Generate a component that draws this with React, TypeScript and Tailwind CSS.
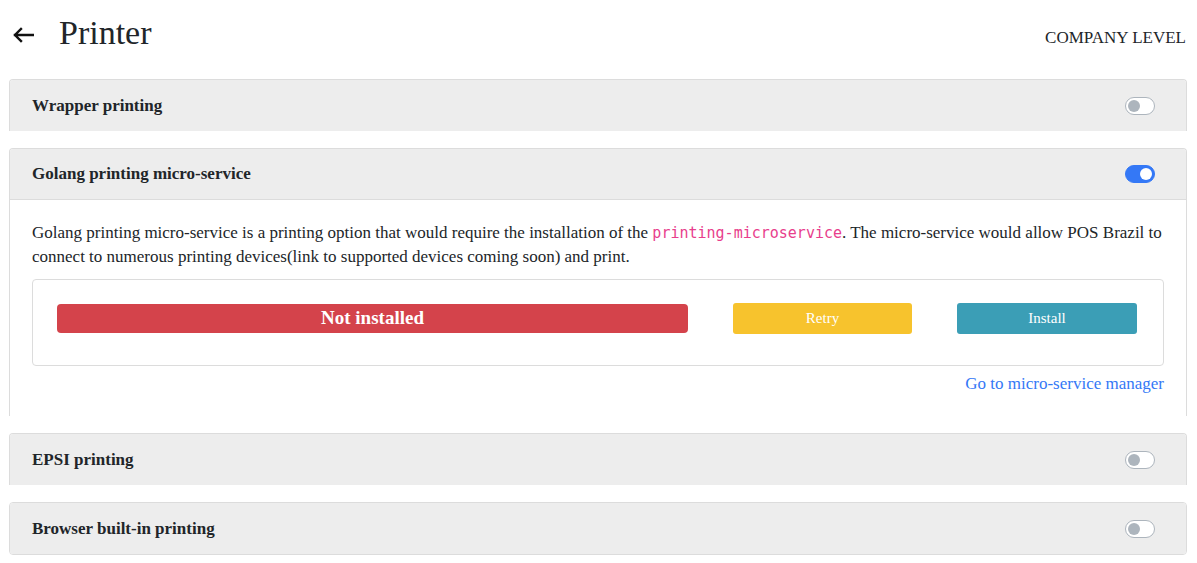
import React from 'react';

const serif = { fontFamily: '"Liberation Serif", "Times New Roman", serif' };

function Toggle({ on }: { on?: boolean }) {
  return on ? (
    <div className="w-[30px] h-[18px] rounded-full bg-[#3478f6] border border-[#3478f6] flex items-center justify-end px-[2px]">
      <div className="w-[12px] h-[12px] rounded-full bg-white" />
    </div>
  ) : (
    <div className="w-[30px] h-[18px] rounded-full bg-white border border-[#adb5bd] flex items-center px-[2px]">
      <div className="w-[12px] h-[12px] rounded-full bg-[#adb5bd]" />
    </div>
  );
}

function PanelHeader({ title, on, open }: { title: string; on?: boolean; open?: boolean }) {
  return (
    <div
      className={`h-[51px] flex items-center justify-between pl-[22px] pr-[31px] bg-[#ededed] ${
        open ? 'border-b border-[#dcdcdc]' : ''
      }`}
    >
      <span className="text-[17px] font-bold text-[#212529]">{title}</span>
      <Toggle on={on} />
    </div>
  );
}

export default function App() {
  return (
    <div className="w-[1197px] h-[563px] bg-white overflow-hidden pl-[9px] pr-[10px]" style={serif}>
      {/* Header */}
      <div className="h-[79px] flex items-center justify-between pb-[14px]">
        <div className="flex items-center">
          <svg width="22" height="16" viewBox="0 0 22 16" className="ml-[3px] mt-[5px]">
            <path d="M21 8H3M9 2L3 8l6 6" fill="none" stroke="#111" strokeWidth="2.4" strokeLinecap="square" />
          </svg>
          <span className="ml-[25px] text-[34px] leading-none text-[#212529]">Printer</span>
        </div>
        <span className="text-[17px] text-[#212529] mt-[10px] mr-[1px]">COMPANY LEVEL</span>
      </div>

      <div className="flex flex-col gap-[17px]">
        {/* Wrapper printing */}
        <div className="border border-b-0 border-[#dcdcdc] rounded-t-[4px] overflow-hidden">
          <PanelHeader title="Wrapper printing" />
        </div>

        {/* Golang printing micro-service */}
        <div className="border border-b-0 border-[#dcdcdc] rounded-t-[4px] overflow-hidden">
          <PanelHeader title="Golang printing micro-service" on open />
          <div className="px-[22px] pt-[21px] pb-[20px] bg-white">
            <p className="text-[17px] leading-[24px] text-[#212529]">
              Golang printing micro-service is a printing option that would require the installation of the{' '}
              <code
                className="text-[15px] leading-[16px] text-[#e83e8c]"
                style={{ fontFamily: '"DejaVu Sans Mono", "Liberation Mono", monospace' }}
              >
                printing-microservice
              </code>
              . The micro-service would allow POS Brazil to connect to numerous printing devices(link to supported
              devices coming soon) and print.
            </p>
            <div className="mt-[10px] border border-[#dcdcdc] rounded-[4px] pl-[24px] pr-[26px] pt-[23px] pb-[31px] flex items-center gap-[45px]">
              <div className="flex-1 h-[29px] rounded-[4px] bg-[#d4434b] text-white font-bold text-[19px] flex items-center justify-center">
                Not installed
              </div>
              <div className="w-[179px] h-[31px] rounded-[3px] bg-[#f7c32d] text-white text-[15px] flex items-center justify-center">
                Retry
              </div>
              <div className="w-[180px] h-[31px] rounded-[3px] bg-[#3b9eb6] text-white text-[15px] flex items-center justify-center">
                Install
              </div>
            </div>
            <div className="mt-[5px] text-right text-[17px] leading-[25px] text-[#3478f6]">Go to micro-service manager</div>
          </div>
        </div>

        {/* EPSI printing */}
        <div className="border border-b-0 border-[#dcdcdc] rounded-t-[4px] overflow-hidden">
          <PanelHeader title="EPSI printing" />
        </div>

        {/* Browser built-in printing */}
        <div className="border border-[#dcdcdc] rounded-[4px] overflow-hidden">
          <PanelHeader title="Browser built-in printing" />
        </div>
      </div>
    </div>
  );
}
